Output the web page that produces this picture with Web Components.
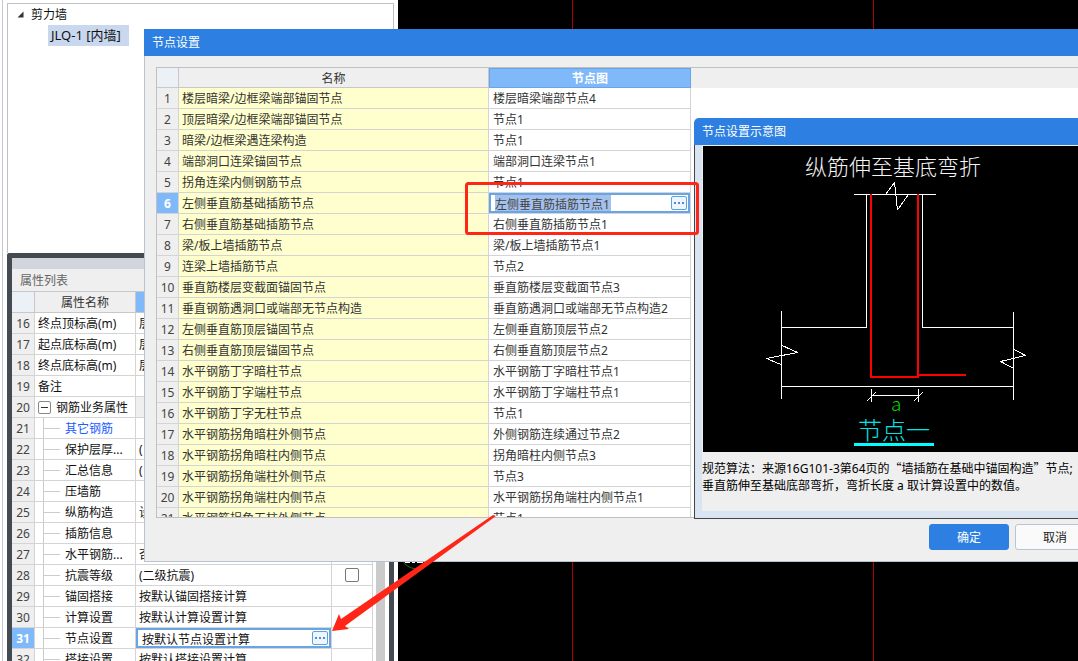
<!DOCTYPE html>
<html lang="zh-CN">
<head>
<meta charset="utf-8">
<title>节点设置</title>
<style>
html,body{margin:0;height:100%;overflow:hidden}
body{font:12px/20px "Noto Sans","Noto Sans CJK SC",sans-serif;color:#111;background:#fff}
.quote{font-family:"Noto Sans CJK SC",sans-serif}
</style>
</head>
<body>
<cad-workspace>
  <component-tree slot="dock"></component-tree>
  <property-panel slot="dock" heading="属性列表"></property-panel>
  <drawing-view slot="view"></drawing-view>
  <window-frame slot="overlay" heading="节点设置">
    <node-grid></node-grid>
    <action-button slot="footer" primary>确定</action-button>
    <action-button slot="footer">取消</action-button>
  </window-frame>
  <preview-window slot="overlay" heading="节点设置示意图">
    <node-diagram></node-diagram>
    <span slot="note">规范算法：来源16G101-3第64页的<span class="quote">“</span>墙插筋在基础中锚固构造<span class="quote">”</span>节点;<br>垂直筋伸至基础底部弯折，弯折长度 a 取计算设置中的数值。</span>
  </preview-window>
  <callout-marks slot="overlay"></callout-marks>
</cad-workspace>

<script>
function define(name, render) {
  customElements.define(name, class extends HTMLElement {
    connectedCallback() {
      if (this.shadowRoot) return;
      this.attachShadow({mode: 'open'}).innerHTML = render(this);
    }
  });
}

define('cad-workspace', () => `
<style>
:host{display:grid;grid-template-columns:398px 1fr;height:100vh;position:relative;overflow:hidden}
.dock{display:flex;flex-direction:column;min-height:0;padding:3px 4px 0 7px;background:linear-gradient(90deg,#fff 2px,#c4c8d0 2px,#c4c8d0 3px,#fff 3px)}
.view{display:grid;min-width:0}
</style>
<div class="dock"><slot name="dock"></slot></div>
<div class="view"><slot name="view"></slot></div>
<slot name="overlay"></slot>`);

define('component-tree', () => `
<style>
:host{display:block;box-sizing:border-box;flex:0 0 250px;border:1px solid #bfc1c6;border-bottom:0}
ul{list-style:none;margin:0;padding:0}
.root{display:flex;align-items:center;gap:7px;padding-left:9px;height:21px}
li li{display:flex}
.item{background:#c9d8ef;padding:0 8px 0 3px;margin-left:40px;height:21px;line-height:21px;font-size:13px}
</style>
<ul><li><span class="root"><svg width="7" height="7"><path d="M6.5 .5V6.5H.5Z" fill="#333"/></svg><span>剪力墙</span></span>
<ul><li><span class="item">JLQ-1 [内墙]</span></li></ul></li></ul>`);

const more = label => `<button class="more" type="button" aria-label="${label}"><svg width="14" height="12"><path d="M2 5h2v2H2zM6 5h2v2H6zM10 5h2v2h-2z" fill="#4a90cc"/></svg></button>`;

/* Cell and in-place editor styles shared by both grids. */
const gridCss = `
table{border-collapse:separate;border-spacing:0;table-layout:fixed}
th,td{box-sizing:border-box;height:21px;padding:2px 0 0 3px;border:0 solid #d4d4d4;border-width:0 1px 1px 0;text-align:left;font-weight:400;white-space:nowrap;overflow:hidden;line-height:18px}
thead th{background:#efefef;text-align:center;padding:2px 0 0;border-color:#c8c8c8;color:#333}
thead th:first-child{background:#ecf1f7}
tbody th{background:#efefef;text-align:center;padding:2px 0 0;color:#444}
.on th{background:#80b9fa;color:#fff;font-weight:700}
.more{display:grid;place-items:center;box-sizing:border-box;width:16px;height:14px;padding:0;border:1px solid #5ba3e0;border-radius:2px;background:#eef5fc;flex:none;margin-left:auto}
.edit{display:flex;align-items:center;box-sizing:border-box;height:20px;padding:0 1px 0 4px;border:2px solid #67a5e6;background:#fff}
.edit input{box-sizing:border-box;flex:none;width:116px;height:16px;border:0;padding:2px 0 0;outline:0;font:inherit;line-height:14px;color:inherit;background:transparent}
`;

const props = [
  [16,'终点顶标高(m)','层'],[17,'起点底标高(m)','层'],[18,'终点底标高(m)','层'],[19,'备注',''],
  [20,'钢筋业务属性','','group'],[21,'其它钢筋','','link'],[22,'保护层厚...','(','sub'],[23,'汇总信息','(','sub'],
  [24,'压墙筋','','sub'],[25,'纵筋构造','设','sub'],[26,'插筋信息','','sub'],[27,'水平钢筋...','否','sub'],
  [28,'抗震等级','(二级抗震)','sub'],[29,'锚固搭接','按默认锚固搭接计算','sub'],[30,'计算设置','按默认计算设置计算','sub'],
  [31,'节点设置','按默认节点设置计算','sub'],[32,'搭接设置','按默认搭接设置计算','sub']];

define('property-panel', el => `
<style>
${gridCss}
:host{display:flex;flex-direction:column;flex:1;min-height:0;box-sizing:border-box;border:5px solid #434a52;border-bottom:0;border-top-left-radius:3px;overflow:hidden;background:#fff}
.grip{flex:none;height:11px;background:#d3d5dc}
h2{flex:none;margin:0;height:22px;font:12px/24px "Noto Sans","Noto Sans CJK SC",sans-serif;color:#666;background:#efefef;padding-left:8px}
.body{display:flex;flex:1;min-height:0}
.scroll{width:9px;background:#cbcbcb;margin-left:3px}
table{width:361px;align-self:flex-start}
thead th{height:22px;border-top-width:1px}
thead th:nth-child(3){background:#80b9fa}
.group td{background:#efefef}.group td:nth-child(2){background:#fff}
.tree-cell{padding-top:0}
.tree{display:flex;height:20px;align-items:center}
.tree span{padding-top:2px}
.fold{display:grid;place-items:center;box-sizing:border-box;width:13px;height:13px;padding:0;border:1px solid #888;border-radius:2px;background:#fff;margin-right:5px}
.branch{flex:none;margin-right:5px}
.link span{color:#1a5cff}
.on .value{padding:0}
.check{padding:0}
.check input{appearance:none;box-sizing:border-box;display:block;width:14px;height:14px;margin:0 auto;border:1px solid #777;border-radius:2px;background:#fff}
</style>
<div class="grip"></div><h2>${el.getAttribute('heading')}</h2>
<div class="body"><table><colgroup><col style="width:23px"><col style="width:101px"><col style="width:196px"><col style="width:41px"></colgroup>
<thead><tr><th></th><th>属性名称</th><th></th><th></th></tr></thead>
<tbody>${props.map(([n, name, value, kind]) => {
  const on = n === 31;
  const cell = kind === 'group'
    ? `<div class="tree"><button class="fold" type="button" aria-label="折叠"><svg width="7" height="1"><path d="M0 .5h7" stroke="#333"/></svg></button><span>${name}</span></div>`
    : kind ? `<div class="tree"><svg class="branch" width="22" height="20"><path d="M5.5 0V20M6 10.5H22" fill="none" stroke="#ccc"/></svg><span>${name}</span></div>` : name;
  const val = on ? `<div class="edit"><input aria-label="${name}" value="${value}">${more(name)}</div>` : value;
  return `<tr class="${kind || ''} ${on ? 'on' : ''}"><th scope="row">${n}</th><td class="${kind ? 'tree-cell' : ''}">${cell}</td><td class="value">${val}</td><td class="check">${n === 28 ? '<input type="checkbox" aria-label="抗震等级附加">' : ''}</td></tr>`;
}).join('')}</tbody></table><div class="scroll"></div></div>`);

define('drawing-view', () => `
<style>:host{display:block;background:#000;overflow:hidden}svg{display:block;width:100%;height:100%}</style>
<svg aria-hidden="true"><path d="M174.5 0V2000M475.5 0V2000" stroke="#b00000"/>
<path d="M5 561Q8 567 17 569" fill="none" stroke="#0a7a18"/><path d="M7 562h5M14 562h3M19 562h6" stroke="#fff" stroke-width="2"/></svg>`);

define('window-frame', el => `
<style>
:host{display:flex;flex-direction:column;position:absolute;left:144px;right:-29px;top:29px;box-sizing:border-box;background:#efefef}
header{height:27px;line-height:27px;background:#2d7fe1;color:#fff;padding-left:8px}
.body{border:1px solid #b9c3d0;border-top:0;padding:11px 0 0 11px}
footer{display:flex;gap:6px;justify-content:flex-end;padding:6px 11px 11px 0}
</style>
<header>${el.getAttribute('heading')}</header><div class="body"><slot></slot><footer><slot name="footer"></slot></footer></div>`);

define('action-button', () => `
<style>
:host{display:block}
button{box-sizing:border-box;width:80px;height:26px;padding:1px 0 0;border:1px solid #b9c3d6;border-radius:3px;background:#fafafa;font:inherit;color:#222;line-height:24px}
:host([primary]) button{background:#2d7fe1;border-color:#2d7fe1;color:#fff}
</style><button type="button"><slot></slot></button>`);

const nodes = [
  ['楼层暗梁/边框梁端部锚固节点','楼层暗梁端部节点4'],['顶层暗梁/边框梁端部锚固节点','节点1'],['暗梁/边框梁遇连梁构造','节点1'],
  ['端部洞口连梁锚固节点','端部洞口连梁节点1'],['拐角连梁内侧钢筋节点','节点1'],['左侧垂直筋基础插筋节点','左侧垂直筋插筋节点1'],
  ['右侧垂直筋基础插筋节点','右侧垂直筋插筋节点1'],['梁/板上墙插筋节点','梁/板上墙插筋节点1'],['连梁上墙插筋节点','节点2'],
  ['垂直筋楼层变截面锚固节点','垂直筋楼层变截面节点3'],['垂直钢筋遇洞口或端部无节点构造','垂直筋遇洞口或端部无节点构造2'],
  ['左侧垂直筋顶层锚固节点','左侧垂直筋顶层节点2'],['右侧垂直筋顶层锚固节点','右侧垂直筋顶层节点2'],['水平钢筋丁字暗柱节点','水平钢筋丁字暗柱节点1'],
  ['水平钢筋丁字端柱节点','水平钢筋丁字端柱节点1'],['水平钢筋丁字无柱节点','节点1'],['水平钢筋拐角暗柱外侧节点','外侧钢筋连续通过节点2'],
  ['水平钢筋拐角暗柱内侧节点','拐角暗柱内侧节点3'],['水平钢筋拐角端柱外侧节点','节点3'],['水平钢筋拐角端柱内侧节点','水平钢筋拐角端柱内侧节点1'],
  ['水平钢筋拐角无柱外侧节点','节点1']];

define('node-grid', () => `
<style>
${gridCss}
:host{display:block;box-sizing:border-box;height:451px;overflow:hidden;border:1px solid #c0c0c0;border-right:0;background:linear-gradient(#efefef 20px,#fff 20px);color:#333}
table{width:534px}
thead th{height:20px;line-height:17px}
thead th:last-child{background:#80b9fa;border:1px solid #67a5e6;color:#fff;font-weight:700;line-height:16px}
td:nth-child(2){background:#ffffcd}
td:last-child{padding-left:4px}
.on td:last-child{padding:0}
.edit input{background:#a4c1ee;color:#444}
</style>
<table><colgroup><col style="width:22px"><col style="width:310px"><col style="width:202px"></colgroup>
<thead><tr><th></th><th>名称</th><th>节点图</th></tr></thead>
<tbody>${nodes.map(([name, pic], i) => `<tr class="${i === 5 ? 'on' : ''}"><th scope="row">${i + 1}</th><td>${name}</td><td>${i === 5 ? `<div class="edit"><input aria-label="${name}" value="${pic}">${more(name)}</div>` : pic}</td></tr>`).join('')}</tbody></table>`);

define('preview-window', el => `
<style>
:host{display:block;position:absolute;left:694px;right:-29px;top:118px}
header{height:27px;line-height:27px;background:#2d7fe1;color:#fff;padding-left:8px;border-top-left-radius:5px}
.body{border:1px solid #444;border-top:0;background:#d8e4f1;padding:0 7px 7px}
.inner{background:#efefef;padding:1px 0 0 1px}
p{margin:0 0 0 -1px;padding:7px 0 17px;line-height:17px;white-space:nowrap;color:#000}
</style>
<header>${el.getAttribute('heading')}</header>
<div class="body"><div class="inner"><slot></slot><p><slot name="note"></slot></p></div></div>`);

define('node-diagram', () => `
<style>
:host{display:block;height:306px;background:#000;overflow:hidden}
svg{display:block;width:100%;height:306px}
text{font-family:"Noto Sans CJK SC",sans-serif;font-weight:300}
</style>
<svg role="img" aria-label="节点一">
<text x="102" y="29" font-size="22" fill="#f4f4f4">纵筋伸至基底弯折</text>
<g fill="none" stroke="#fff" stroke-linejoin="bevel" shape-rendering="crispEdges">
<path d="M151 48.5H233M163.500 48V181.500H78M219.500 48V181.500H310M78 240.500H310M78.500 165V253M310.500 166V254"/>
<path d="M183 48L191.500 36.500 194.500 64 205 49"/>
<path d="M78 199L94.500 206.500 63.500 212.500 78 218.500M310 203L322.500 209.500 297.500 215.500 310 222"/>
<path d="M168.500 243V256M215.500 243V256M168 249.500H216M164 255L173 246M211 255L220 246"/>
</g>
<path d="M168 48V231H215V48M215 229H263" fill="none" stroke="#f00" stroke-width="2" shape-rendering="crispEdges"/>
<text x="188" y="265" font-size="19" fill="#0d0">a</text>
<text x="155" y="293" font-size="24" fill="#00e5e5">节点一</text>
<path d="M151 298.500H231" stroke="#0ff" stroke-width="3"/>
</svg>`);

define('callout-marks', () => `
<style>:host{position:absolute;inset:0;pointer-events:none}svg{display:block;width:100%;height:100%}</style>
<svg aria-hidden="true"><rect x="466.500" y="183.500" width="231" height="50" rx="2" fill="none" stroke="#ff2517" stroke-width="3"/>
<path d="M493 515L496 516 345 626 349 629 332 631 339 614 341 619Z" fill="#ff2517"/></svg>`);
</script>
</body>
</html>
